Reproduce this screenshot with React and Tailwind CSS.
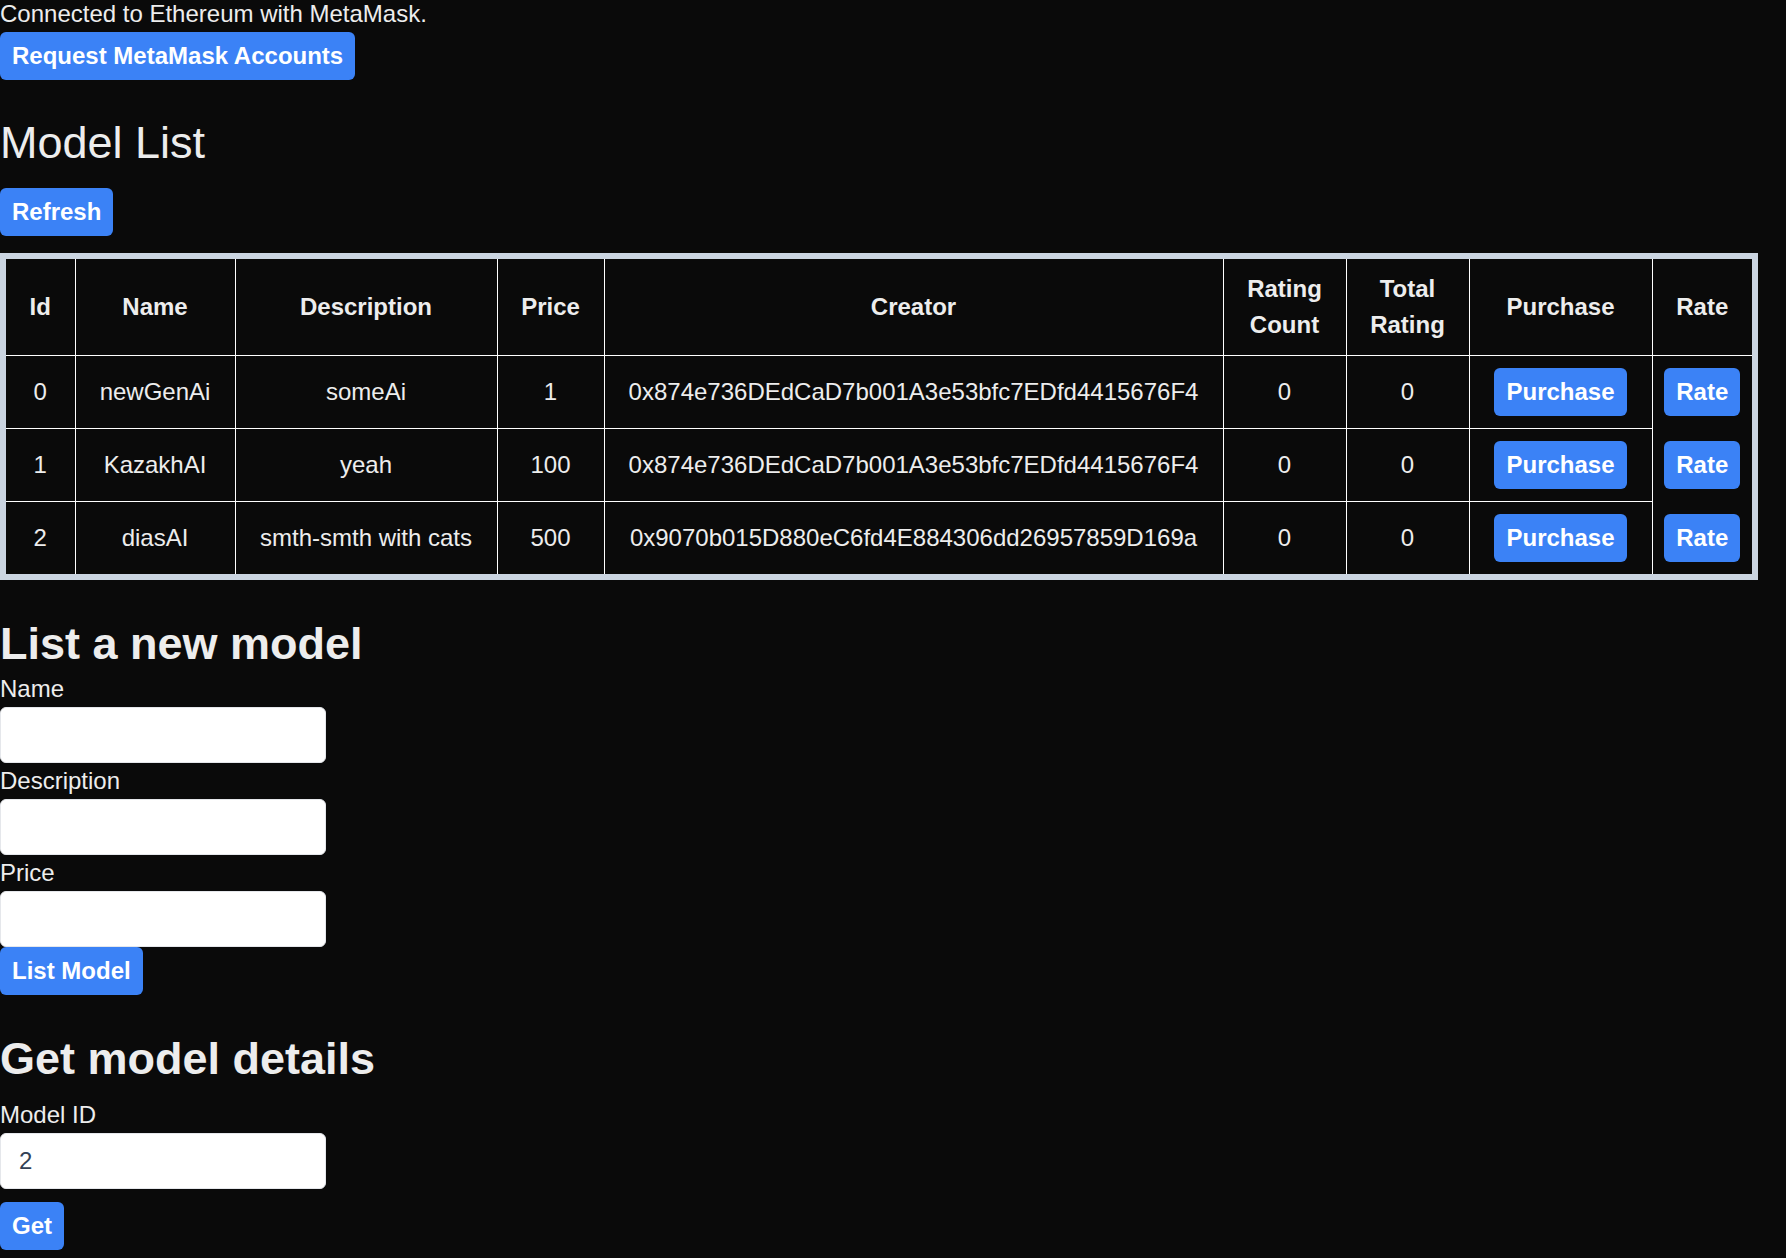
import React from "react";

const rows = [
  { id: 0, name: "newGenAi", desc: "someAi", price: "1", creator: "0x874e736DEdCaD7b001A3e53bfc7EDfd4415676F4" },
  { id: 1, name: "KazakhAI", desc: "yeah", price: "100", creator: "0x874e736DEdCaD7b001A3e53bfc7EDfd4415676F4" },
  { id: 2, name: "diasAI", desc: "smth-smth with cats", price: "500", creator: "0x9070b015D880eC6fd4E884306dd26957859D169a" },
];

function Btn({ children, className = "" }) {
  return (
    <button className={"inline-block bg-[#3b82f6] text-white font-bold rounded-[6px] px-[12px] py-[6px] leading-[36px] " + className}>
      {children}
    </button>
  );
}

function Field({ label, value }) {
  return (
    <div>
      <label className="block leading-[36px]">{label}</label>
      <input
        readOnly
        value={value || ""}
        className="block w-[326px] h-[56px] bg-white rounded-[6px] border border-[#e5e7eb] px-[18px] text-[#334155] text-[24px] outline-none"
      />
    </div>
  );
}

export default function App() {
  return (
    <div className="min-h-screen bg-[#0a0a0a] text-[#ededed] font-['Liberation_Sans',Arial,sans-serif] text-[24px] leading-[36px]">
      <div className="leading-[28px]">Connected to Ethereum with MetaMask.</div>
      <div className="mt-[4px]">
        <Btn>Request MetaMask Accounts</Btn>
      </div>

      <h1 className="mt-[36px] text-[45px] leading-[54px] font-normal">Model List</h1>
      <div className="mt-[18px]">
        <Btn>Refresh</Btn>
      </div>

      <div className="mt-[17px] inline-block border-[6px] border-[#cbd5e1] align-top">
        <table className="border-collapse border-hidden table-fixed w-[1746px] text-center">
          <thead>
            <tr>
              <th className="w-[69px] border border-white py-[12px] px-[8px] font-bold">Id</th>
              <th className="w-[160px] border border-white py-[12px] px-[8px] font-bold">Name</th>
              <th className="w-[262px] border border-white py-[12px] px-[8px] font-bold">Description</th>
              <th className="w-[107px] border border-white py-[12px] px-[8px] font-bold">Price</th>
              <th className="w-[619px] border border-white py-[12px] px-[8px] font-bold">Creator</th>
              <th className="w-[123px] border border-white py-[12px] px-[12px] font-bold">Rating Count</th>
              <th className="w-[123px] border border-white py-[12px] px-[12px] font-bold">Total Rating</th>
              <th className="w-[183px] border border-white py-[12px] px-[8px] font-bold">Purchase</th>
              <th className="w-[100px] border border-white py-[12px] px-[8px] font-bold">Rate</th>
            </tr>
          </thead>
          <tbody>
            {rows.map((r) => (
              <tr key={r.id}>
                <td className="border border-white py-[12px] px-[4px]">{r.id}</td>
                <td className="border border-white py-[12px] px-[4px]">{r.name}</td>
                <td className="border border-white py-[12px] px-[4px]">{r.desc}</td>
                <td className="border border-white py-[12px] px-[4px]">{r.price}</td>
                <td className="border border-white py-[12px] px-[4px] whitespace-nowrap">{r.creator}</td>
                <td className="border border-white py-[12px] px-[4px]">0</td>
                <td className="border border-white py-[12px] px-[4px]">0</td>
                <td className="border border-white py-[12px] px-[4px]">
                  <Btn>Purchase</Btn>
                </td>
                <td className="border-l border-white py-[12px] px-[4px]">
                  <Btn>Rate</Btn>
                </td>
              </tr>
            ))}
          </tbody>
        </table>
      </div>

      <h2 className="mt-[37px] text-[45px] leading-[54px] font-bold">List a new model</h2>
      <Field label="Name" />
      <Field label="Description" />
      <Field label="Price" />
      <div>
        <Btn>List Model</Btn>
      </div>

      <h2 className="mt-[37px] text-[45px] leading-[54px] font-bold">Get model details</h2>
      <div className="mt-[11px]">
        <Field label="Model ID" value="2" />
      </div>
      <div className="mt-[13px]">
        <Btn>Get</Btn>
      </div>
    </div>
  );
}
